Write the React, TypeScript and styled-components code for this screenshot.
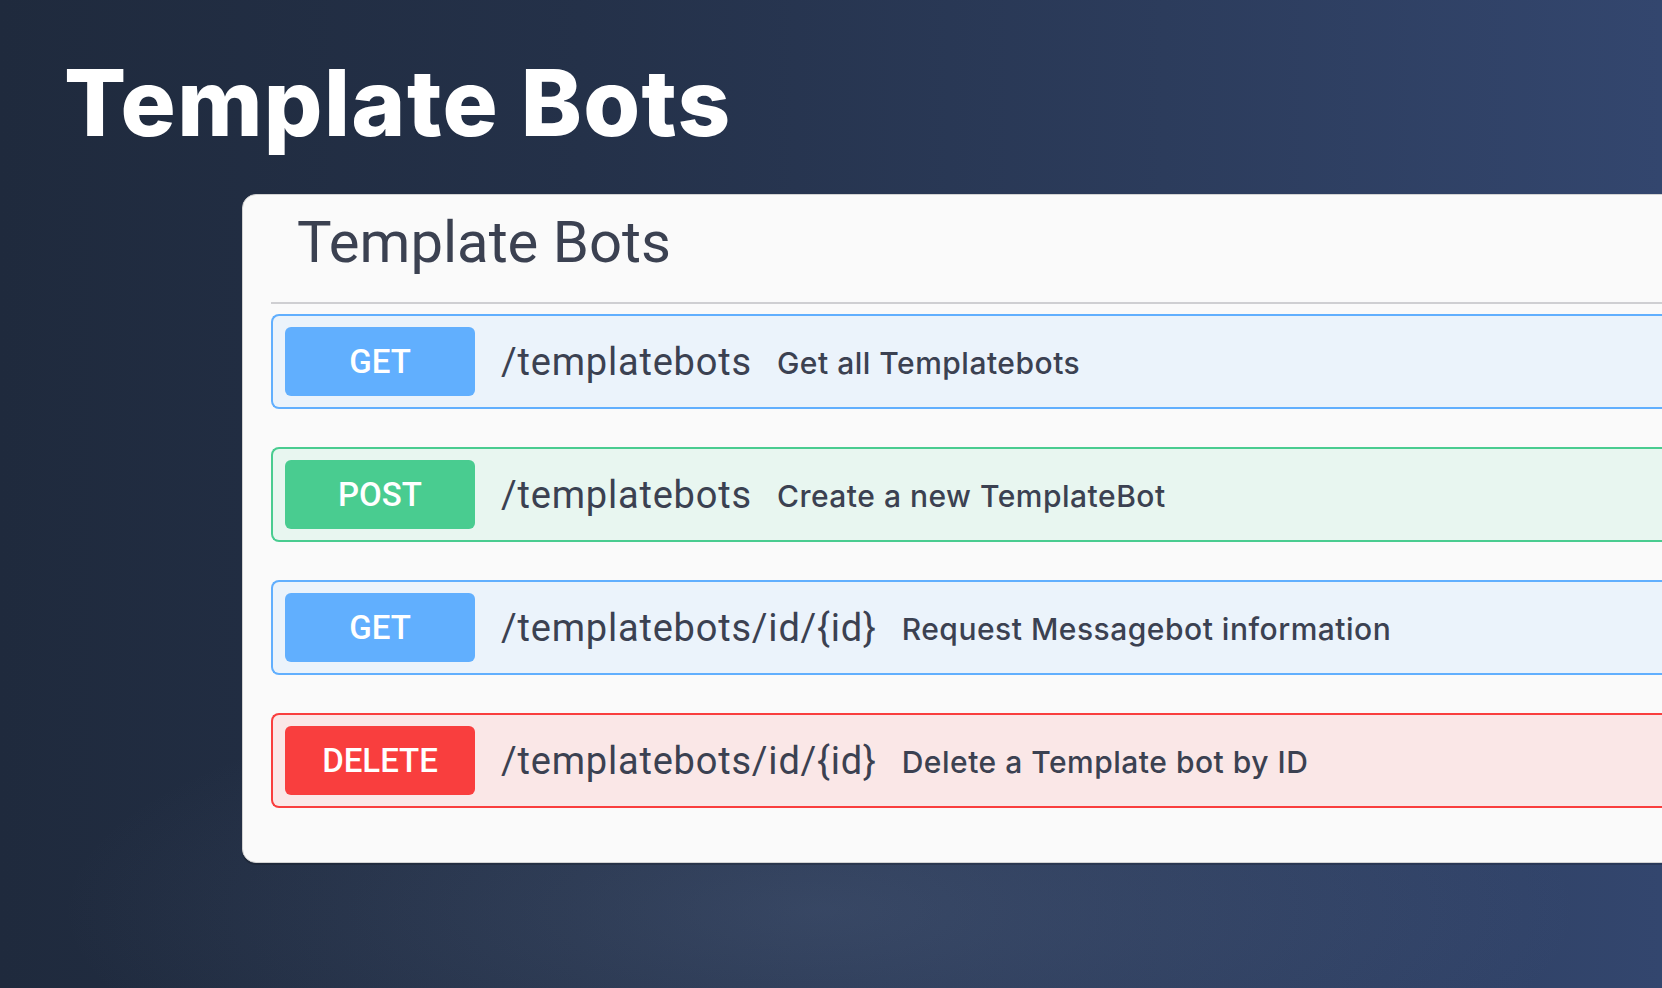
import React from 'react';
import styled, { createGlobalStyle } from 'styled-components';

type Method = 'GET' | 'POST' | 'DELETE';

const methodColors: Record<Method, { main: string; soft: string }> = {
  GET: { main: '#61affe', soft: '#ebf3fb' },
  POST: { main: '#49cc90', soft: '#e8f6f0' },
  DELETE: { main: '#f93e3e', soft: '#fae7e7' },
};

const endpoints: { method: Method; path: string; summary: string }[] = [
  { method: 'GET', path: '/templatebots', summary: 'Get all Templatebots' },
  { method: 'POST', path: '/templatebots', summary: 'Create a new TemplateBot' },
  { method: 'GET', path: '/templatebots/id/{id}', summary: 'Request Messagebot information' },
  { method: 'DELETE', path: '/templatebots/id/{id}', summary: 'Delete a Template bot by ID' },
];

export default function App() {
  return (
    <>
      <GlobalStyle />
      <Page>
        <Hero>Template Bots</Hero>
        <Card>
          <CardTitle>Template Bots</CardTitle>
          <Divider />
          <OpList>
            {endpoints.map((ep, i) => (
              <OpRow key={i} $method={ep.method}>
                <Badge $method={ep.method}>{ep.method}</Badge>
                <Path>{ep.path}</Path>
                <Summary>{ep.summary}</Summary>
              </OpRow>
            ))}
          </OpList>
        </Card>
      </Page>
    </>
  );
}

// ===== styled-components =====

const GlobalStyle = createGlobalStyle`
  html, body {
    margin: 0;
    padding: 0;
    width: 100%;
    height: 100%;
    overflow: hidden;
  }
  body {
    font-family: Roboto, "Liberation Sans", sans-serif;
  }
`;

const Page = styled.div`
  position: relative;
  width: 1662px;
  height: 988px;
  overflow: hidden;
  box-sizing: border-box;
  padding: 50px 0 0 242px;
  background:
    radial-gradient(ellipse 760px 240px at 820px 910px, rgba(120, 140, 175, 0.2), rgba(120, 140, 175, 0) 100%),
    linear-gradient(90deg, #1f2a3d 0%, #243149 35%, #2c3c5c 70%, #33466e 100%);
`;

const Hero = styled.h1`
  margin: 0 0 0 -178px;
  font-family: Inter, "Liberation Sans", sans-serif;
  font-weight: 800;
  font-size: 92px;
  line-height: 106px;
  letter-spacing: 1.4px;
  color: #ffffff;
  height: 144px;
`;

const Card = styled.div`
  width: 1500px;
  box-sizing: border-box;
  background: #fafafa;
  border: 1px solid #d2d2d2;
  border-radius: 14px;
  box-shadow: 0 2px 0 rgba(0, 0, 0, 0.18);
  padding: 11px 0 54px 28px;
`;

const CardTitle = styled.h2`
  margin: 0 0 24px 26px;
  font-family: Roboto, "Liberation Sans", sans-serif;
  font-weight: 400;
  font-size: 58px;
  line-height: 72px;
  color: #3b4151;
`;

const Divider = styled.div`
  height: 2px;
  background: #cfcfd2;
  margin-bottom: 10px;
`;

const OpList = styled.div`
  display: flex;
  flex-direction: column;
  gap: 38px;
`;

const OpRow = styled.div<{ $method: Method }>`
  display: flex;
  align-items: center;
  height: 95px;
  box-sizing: border-box;
  padding: 0 12px;
  border: 2px solid ${p => methodColors[p.$method].main};
  border-right: none;
  border-radius: 8px 0 0 8px;
  background: ${p => methodColors[p.$method].soft};
`;

const Badge = styled.div<{ $method: Method }>`
  flex: 0 0 190px;
  height: 69px;
  display: flex;
  align-items: center;
  justify-content: center;
  border-radius: 6px;
  background: ${p => methodColors[p.$method].main};
  color: #ffffff;
  font-family: Roboto, "Liberation Sans", sans-serif;
  font-weight: 500;
  font-size: 33px;
`;

const Path = styled.span`
  margin-left: 26px;
  padding-top: 3px;
  font-family: Roboto, "Liberation Sans", sans-serif;
  font-size: 38px;
  letter-spacing: 0.8px;
  line-height: 1.2;
  color: #3b4151;
`;

const Summary = styled.span`
  margin-left: 25px;
  padding-top: 2px;
  font-family: Inter, "Liberation Sans", sans-serif;
  font-weight: 500;
  font-size: 30px;
  letter-spacing: 0.5px;
  line-height: 1.2;
  color: #3b4151;
`;
